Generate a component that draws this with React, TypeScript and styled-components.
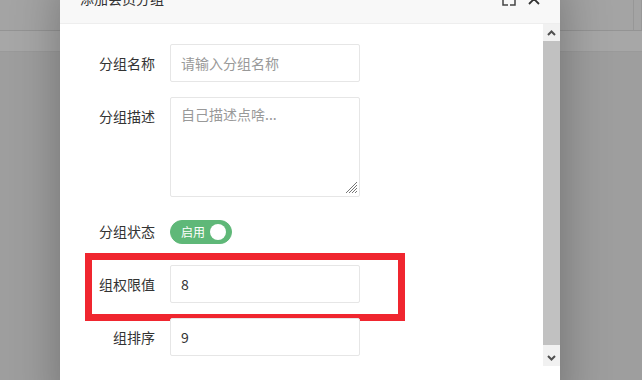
import React from 'react';
import styled, { createGlobalStyle } from 'styled-components';

const GlobalStyle = createGlobalStyle`
  html, body {
    margin: 0;
    padding: 0;
    width: 642px;
    height: 380px;
    overflow: hidden;
  }
  body {
    font-family: "Noto Sans CJK SC", "Noto Sans", sans-serif;
    font-size: 14px;
    color: #333;
  }
  * {
    box-sizing: border-box;
  }
`;

const Page = styled.div`
  position: relative;
  width: 642px;
  height: 380px;
  overflow: hidden;
  display: flex;
  flex-direction: column;
  background: #9f9f9f;
`;

const PageHeader = styled.div`
  height: 31px;
  display: flex;
  background: #a4a4a4;
  border-bottom: 1px solid #949494;
`;

const HeaderCell = styled.div<{ $width?: number }>`
  flex: ${({ $width }) => ($width ? `0 0 ${$width}px` : '1')};
  border-right: 1px solid #979797;
`;

const PageToolbar = styled.div`
  height: 21px;
  background: #a7a7a7;
  border-bottom: 1px solid #9a9a9a;
`;

const PageBody = styled.div`
  flex: 1;
  background: #9e9e9e;
`;

const Dialog = styled.div`
  position: absolute;
  top: -19px;
  left: 60px;
  width: 500px;
  background: #fff;
  border-radius: 2px;
  box-shadow: 1px 1px 50px rgba(0, 0, 0, 0.3);
`;

const TitleBar = styled.div`
  position: relative;
  height: 43px;
  padding: 0 80px 0 20px;
  line-height: 35px;
  background: #f8f8f8;
  border-bottom: 1px solid #eee;
  color: #333;
  font-size: 14px;
  white-space: nowrap;
`;

const WinIcons = styled.div`
  position: absolute;
  right: 20px;
  top: 11px;
  display: flex;
  gap: 12px;
  align-items: center;
`;

const DialogBody = styled.div`
  display: flex;
  height: 342px;
`;

const FormArea = styled.div`
  flex: 1;
  padding-top: 20px;
  display: flex;
  flex-direction: column;
  gap: 15px;
`;

const FormItem = styled.div`
  position: relative;
  display: flex;
  align-items: flex-start;
`;

const Label = styled.label`
  flex: 0 0 110px;
  padding: 9px 15px;
  line-height: 20px;
  text-align: right;
  color: #333;
  font-size: 14px;
`;

const TextInput = styled.input`
  width: 190px;
  height: 38px;
  padding: 0 10px;
  border: 1px solid #e6e6e6;
  border-radius: 2px;
  background: #fff;
  font-family: inherit;
  font-size: 14px;
  color: #333;
  outline: none;

  &::placeholder {
    color: #999;
  }
`;

const AreaWrap = styled.div`
  position: relative;
  width: 190px;
  height: 100px;
`;

const TextArea = styled.textarea`
  display: block;
  width: 190px;
  height: 100px;
  padding: 6px 10px;
  line-height: 20px;
  border: 1px solid #e6e6e6;
  border-radius: 2px;
  font-family: inherit;
  font-size: 14px;
  color: #333;
  resize: none;
  outline: none;

  &::placeholder {
    color: #999;
  }
`;

const Grip = styled.svg`
  position: absolute;
  right: 2px;
  bottom: 3px;
`;

const Switch = styled.div`
  margin-top: 8px;
  height: 24px;
  width: 62px;
  border-radius: 20px;
  background: #5fb878;
  border: 1px solid #5fb878;
  display: flex;
  align-items: center;
  justify-content: space-between;
  padding: 0 5px 0 10px;
`;

const SwitchText = styled.em`
  font-style: normal;
  font-size: 12px;
  color: #fff;
  line-height: 22px;
`;

const Knob = styled.i`
  width: 16px;
  height: 16px;
  border-radius: 50%;
  background: #fff;
`;

const Highlight = styled.div`
  position: absolute;
  left: 25px;
  top: -12px;
  width: 320px;
  height: 68px;
  border: 7px solid #f0262f;
  pointer-events: none;
`;

const ScrollBar = styled.div`
  flex: 0 0 17px;
  display: flex;
  flex-direction: column;
  background: #f1f1f1;
`;

const ScrollButton = styled.div`
  height: 17px;
  display: flex;
  align-items: center;
  justify-content: center;
  background: #f1f1f1;
`;

const ScrollTrack = styled.div`
  flex: 1;
  padding-bottom: 4px;
  display: flex;
`;

const ScrollThumb = styled.div`
  flex: 1;
  background: #c1c1c1;
`;

const Footer = styled.div`
  height: 50px;
  background: #fff;
`;

const Chevron: React.FC<{ up?: boolean }> = ({ up }) => (
  <svg width="9" height="6" viewBox="0 0 9 6">
    <path
      d={up ? 'M1 5 L4.5 1.5 L8 5' : 'M1 1 L4.5 4.5 L8 1'}
      fill="none"
      stroke="#505050"
      strokeWidth="2"
    />
  </svg>
);

export default function App() {
  return (
    <>
      <GlobalStyle />
      <Page>
        <PageHeader>
          <HeaderCell />
          <HeaderCell $width={8} />
        </PageHeader>
        <PageToolbar />
        <PageBody />

        <Dialog>
          <TitleBar>
            添加会员分组
            <WinIcons>
              <svg width="14" height="14" viewBox="0 0 14 14">
                <path
                  d="M1 1 H6 M8 1 H13 V13 H8 M6 13 H1 V1"
                  fill="none"
                  stroke="#444"
                  strokeWidth="1.5"
                />
              </svg>
              <svg width="12" height="12" viewBox="0 0 12 12">
                <path d="M1 1 L11 11 M11 1 L1 11" stroke="#333" strokeWidth="1.8" />
              </svg>
            </WinIcons>
          </TitleBar>

          <DialogBody>
            <FormArea>
              <FormItem>
                <Label>分组名称</Label>
                <TextInput placeholder="请输入分组名称" />
              </FormItem>
              <FormItem>
                <Label>分组描述</Label>
                <AreaWrap>
                  <TextArea placeholder="自己描述点啥..." />
                  <Grip width="13" height="13" viewBox="0 0 13 13">
                    <path
                      d="M12 1 L1 12 M12 4 L4 12 M12 7 L7 12 M12 10 L10 12"
                      stroke="#777"
                      strokeWidth="1"
                    />
                  </Grip>
                </AreaWrap>
              </FormItem>
              <FormItem>
                <Label>分组状态</Label>
                <Switch>
                  <SwitchText>启用</SwitchText>
                  <Knob />
                </Switch>
              </FormItem>
              <FormItem>
                <Highlight />
                <Label>组权限值</Label>
                <TextInput defaultValue="8" />
              </FormItem>
              <FormItem>
                <Label>组排序</Label>
                <TextInput defaultValue="9" />
              </FormItem>
            </FormArea>
            <ScrollBar>
              <ScrollButton>
                <Chevron up />
              </ScrollButton>
              <ScrollTrack>
                <ScrollThumb />
              </ScrollTrack>
              <ScrollButton>
                <Chevron />
              </ScrollButton>
            </ScrollBar>
          </DialogBody>
          <Footer />
        </Dialog>
      </Page>
    </>
  );
}
